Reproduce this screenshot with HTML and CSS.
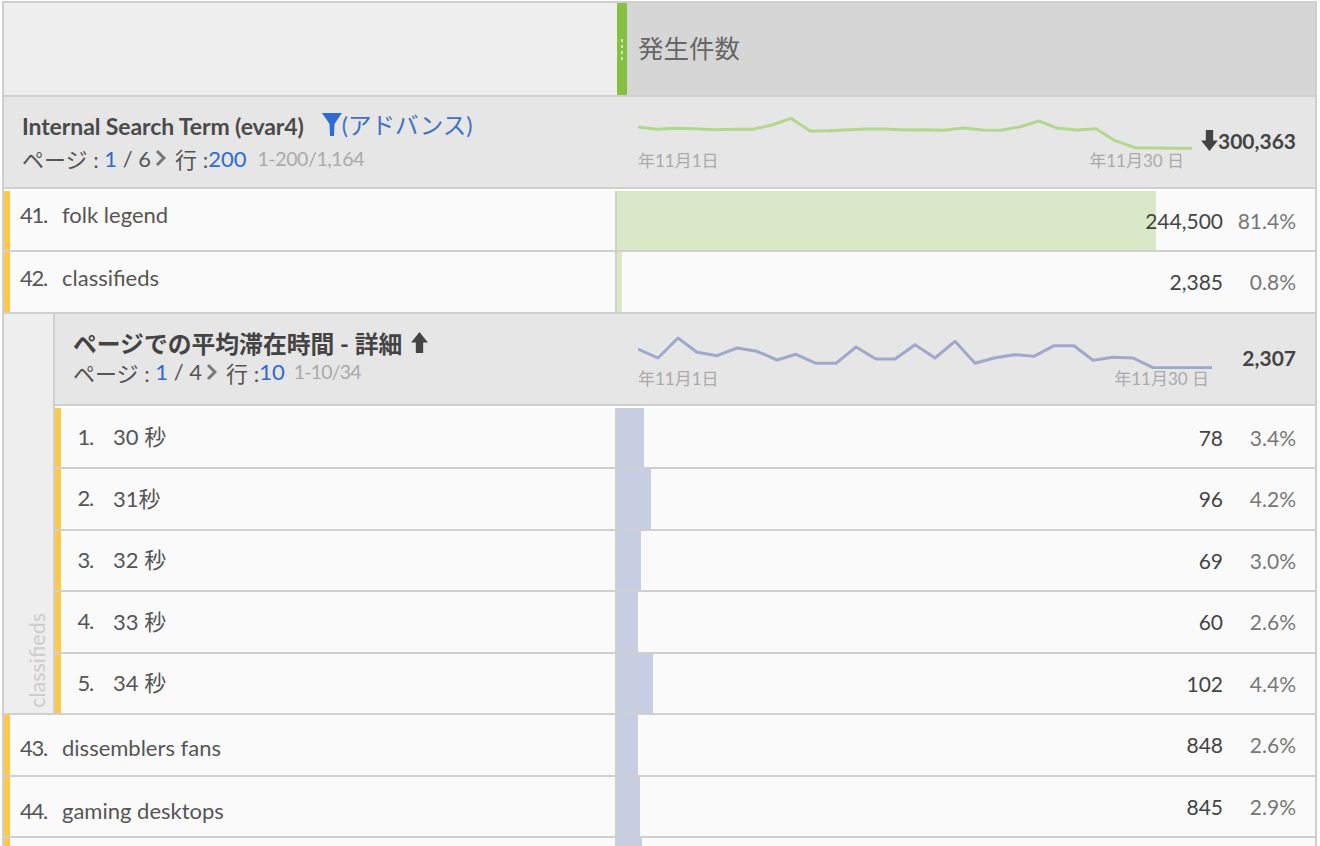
FILE: index.html
```html
<!DOCTYPE html>
<html lang="ja">
<head>
  <meta charset="UTF-8" />
  <title>Freeform Table</title>
  <link rel="stylesheet" href="styles.css">
</head>
<body>
  <div class="report">
    <div class="col-head">
      <div class="col-blank"></div>
      <div class="col-grip"><span></span><span></span><span></span><span></span></div>
      <div class="col-title">発生件数</div>
    </div>

    <div class="summary">
      <div class="summary-name">
        <div class="summary-title">
          <b>Internal Search Term (evar4)</b>
          <svg class="funnel" viewBox="0 0 20 23"><path d="M0 0H20L12.500 11L12 23H8L7.500 11Z"/></svg><span class="link">(アドバンス)</span>
        </div>
        <div class="pager">ページ : <em>1</em> / 6<svg class="chev" viewBox="0 0 11 18"><path d="M2 2L9 9L2 16"/></svg>行 :<em>200</em><small>1-200/1,164</small></div>
      </div>
      <div class="summary-data">
        <div class="trend trend-top">
          <svg viewBox="0 0 554 36"><polyline class="line-green" points="0,12 19,14.300 38,13.300 57,13.700 76,14.700 96,14.300 115,14.300 134,10 153,3.300 172,16 191,15.700 210,14.700 229,14 248,14 267,15 286,14.700 306,15.300 325,13 344,15 363,15.300 382,11.700 401,6 420,13.300 439,15 458,13.700 477,25.700 497,32.700 516,33 535,33.300 554,33.300"/></svg>
          <div class="dates"><span>年11月1日</span><span>年11月30 日</span></div>
        </div>
        <div class="total"><svg class="arrow" viewBox="0 0 16 20"><path d="M4.500 0H11.500V10H16L8 20L0 10H4.500Z"/></svg>300,363</div>
      </div>
    </div>

    <div class="rows">
      <div class="row">
        <div class="name up-more"><span class="rank">41.</span><span>folk legend</span></div>
        <div class="data"><div class="bar bar-green" style="width:539px"></div><span class="num">244,500</span><span class="pct">81.4%</span></div>
      </div>
      <div class="row">
        <div class="name up"><span class="rank">42.</span><span>classifieds</span></div>
        <div class="data"><div class="bar bar-green" style="width:5px"></div><span class="num">2,385</span><span class="pct">0.8%</span></div>
      </div>
    </div>

    <div class="nested">
      <div class="side"><span>classifieds</span></div>
      <div class="nested-main">
        <div class="summary summary-sub">
          <div class="summary-name">
            <div class="summary-title"><b>ページでの平均滞在時間 - 詳細</b><svg class="arrow arrow-up" viewBox="0 0 16 20"><path d="M4.500 20H11.500V10H16L8 0L0 10H4.500Z"/></svg></div>
            <div class="pager">ページ : <em>1</em> / 4<svg class="chev" viewBox="0 0 11 18"><path d="M2 2L9 9L2 16"/></svg>行 :<em>10</em><small>1-10/34</small></div>
          </div>
          <div class="summary-data">
            <div class="trend trend-sub">
              <svg viewBox="0 0 574 36"><polyline class="line-blue" points="0,16 20,25 40,5 59,19.300 79,22.700 99,15 119,18.300 139,27 158,21.300 178,30.300 198,30.300 218,14 238,26 257,26 277,11.700 297,25 317,8.300 337,30.300 356,25 376,21.700 396,23.300 416,12.700 436,12.700 455,27.300 475,24.300 495,25 515,34.700 535,34.700 554,34.700 574,34.700"/></svg>
              <div class="dates"><span>年11月1日</span><span>年11月30 日</span></div>
            </div>
            <div class="total">2,307</div>
          </div>
        </div>
        <div class="rows">
          <div class="row">
            <div class="name"><span class="rank">1.</span><span>30 秒</span></div>
            <div class="data"><div class="bar bar-blue" style="width:27px"></div><span class="num">78</span><span class="pct">3.4%</span></div>
          </div>
          <div class="row">
            <div class="name"><span class="rank">2.</span><span>31秒</span></div>
            <div class="data"><div class="bar bar-blue" style="width:34px"></div><span class="num">96</span><span class="pct">4.2%</span></div>
          </div>
          <div class="row">
            <div class="name"><span class="rank">3.</span><span>32 秒</span></div>
            <div class="data"><div class="bar bar-blue" style="width:24px"></div><span class="num">69</span><span class="pct">3.0%</span></div>
          </div>
          <div class="row">
            <div class="name"><span class="rank">4.</span><span>33 秒</span></div>
            <div class="data"><div class="bar bar-blue" style="width:21px"></div><span class="num">60</span><span class="pct">2.6%</span></div>
          </div>
          <div class="row">
            <div class="name"><span class="rank">5.</span><span>34 秒</span></div>
            <div class="data"><div class="bar bar-blue" style="width:36px"></div><span class="num">102</span><span class="pct">4.4%</span></div>
          </div>
        </div>
      </div>
    </div>

    <div class="row">
      <div class="name down"><span class="rank">43.</span><span>dissemblers fans</span></div>
      <div class="data"><div class="bar bar-blue" style="width:21px"></div><span class="num">848</span><span class="pct">2.6%</span></div>
    </div>
    <div class="row">
      <div class="name down-more"><span class="rank">44.</span><span>gaming desktops</span></div>
      <div class="data"><div class="bar bar-blue" style="width:23px"></div><span class="num">845</span><span class="pct">2.9%</span></div>
    </div>
    <div class="row row-cut">
      <div class="name"></div>
      <div class="data"><div class="bar bar-blue" style="width:25px"></div></div>
    </div>
  </div>
</body>
</html>
```

FILE: styles.css
```css
html, body {
  margin: 0;
  padding: 0;
  height: 846px;
  overflow: hidden;
  background-color: #fff;
}

body {
  font-family: Lato, "Noto Sans CJK JP", sans-serif;
  color: #444;
  padding-top: 1px;
  box-sizing: border-box;
}

.report {
  width: 1315px;
  margin-left: 2px;
  border: 2px solid #cfcfcf;
  border-bottom: none;
  box-sizing: border-box;
}

/* column header */
.col-head {
  display: flex;
  height: 94px;
  border-bottom: 2px solid #cfcfcf;
  box-sizing: border-box;
}

.col-blank {
  width: 613px;
  background-color: #eee;
}

.col-grip {
  width: 10px;
  background-color: #85c042;
  display: flex;
  flex-direction: column;
  align-items: center;
  justify-content: center;
  gap: 3px;
}

.col-grip span {
  width: 2px;
  height: 3px;
  background-color: #d5e8bd;
}

.col-title {
  flex: 1;
  background-color: #d6d6d6;
  color: #666;
  font-size: 25.500px;
  padding-left: 11px;
  padding-top: 25px;
  box-sizing: border-box;
}

/* summary row */
.summary {
  display: flex;
  height: 92px;
  background-color: #e6e6e6;
  border-bottom: 2px solid #cfcfcf;
  box-sizing: border-box;
}

.summary-name {
  width: 613px;
  padding: 15px 0 0 18px;
  box-sizing: border-box;
}

.summary-title {
  display: flex;
  align-items: center;
  height: 28px;
  font-size: 23px;
}

.summary-title b {
  color: #4b4b4b;
  letter-spacing: -0.1px;
}

.funnel {
  width: 20px;
  height: 23px;
  margin: 0 0 4px 18px;
  fill: #2f6bd1;
}

.link {
  color: #4170c4;
  font-size: 23.500px;
  margin-bottom: 4px;
}

.pager {
  display: flex;
  align-items: center;
  height: 30px;
  margin-top: 3px;
  font-size: 22px;
  white-space: pre;
  color: #555;
}

.pager em {
  font-style: normal;
  color: #2f6bd1;
}

.pager small {
  font-size: 19.500px;
  letter-spacing: -0.4px;
  color: #aaa;
  margin-left: 11px;
}

.chev {
  width: 11px;
  height: 18px;
  margin: 0 9px 0 4px;
  fill: none;
  stroke: #777;
  stroke-width: 3;
}

.summary-data {
  flex: 1;
  display: flex;
  align-items: center;
  justify-content: space-between;
  padding: 0 19px 0 21px;
}

.trend svg {
  display: block;
  height: 36px;
}

.trend-top {
  width: 554px;
  margin-top: 2px;
}

.trend-top svg {
  width: 554px;
}

.trend-top .dates {
  padding-right: 8px;
}

.trend-sub {
  width: 574px;
  margin-top: 4px;
}

.trend-sub svg {
  width: 574px;
}

.trend-sub .dates {
  padding-right: 3px;
}

.line-green, .line-blue {
  fill: none;
  stroke-width: 3;
  stroke-linejoin: round;
}

.line-green {
  stroke: #b5d68f;
}

.line-blue {
  stroke: #9ea9cb;
}

.dates {
  display: flex;
  justify-content: space-between;
  font-size: 17px;
  line-height: 20px;
  color: #aaa;
}

.total {
  display: flex;
  align-items: center;
  font-size: 21px;
  font-weight: 700;
  color: #444;
  margin-bottom: 3px;
}

.arrow {
  width: 17px;
  height: 21px;
  fill: #444;
  margin-right: 0;
}

.arrow-up {
  margin-left: 9px;
}

/* data rows */
.rows {
  padding-top: 1.500px;
}

.row {
  display: flex;
  height: 61.500px;
  background-color: #fafafa;
  border-bottom: 2px solid #cfcfcf;
  box-sizing: border-box;
}

.row-cut {
  height: 8px;
  border-bottom: none;
}

.name {
  width: 613px;
  display: flex;
  align-items: center;
  font-size: 22px;
  color: #555;
  border-left: 6px solid #fec84b;
  border-right: 2px solid #cfcfcf;
  box-sizing: border-box;
}

.name.up {
  padding-bottom: 8px;
}

.name.up-more {
  padding-bottom: 12px;
}

.name.down {
  padding-top: 5px;
}

.name.down-more {
  padding-top: 9px;
}

.rank {
  width: 37px;
  margin-right: 15px;
  text-align: right;
  letter-spacing: -1.200px;
}

.data {
  flex: 1;
  position: relative;
  display: flex;
  align-items: center;
  justify-content: flex-end;
  font-size: 21px;
  padding-right: 19px;
}

.bar {
  position: absolute;
  left: 0;
  top: 0;
  bottom: 0;
}

.bar-green {
  background-color: #d9e8c6;
}

.bar-blue {
  background-color: #c7cee2;
}

.num, .pct {
  position: relative;
  text-align: right;
}

.num {
  color: #444;
}

.pct {
  width: 73px;
  color: #777;
}

/* breakdown under a row */
.nested {
  display: flex;
}

.side {
  width: 51px;
  background-color: #eee;
  border-right: 2px solid #cfcfcf;
  border-bottom: 2px solid #cfcfcf;
  box-sizing: border-box;
  display: flex;
  justify-content: flex-end;
  align-items: flex-end;
}

.side span {
  writing-mode: vertical-rl;
  transform: rotate(180deg);
  font-size: 21.500px;
  line-height: 26px;
  color: #ccc;
  margin: 0 3px 5px 0;
}

.nested-main {
  flex: 1;
}

.nested .summary {
  height: 92.500px;
}

.nested .summary-name {
  width: 562px;
  padding-top: 15px;
}

.summary-sub .summary-title b {
  font-size: 23.800px;
  letter-spacing: 0;
  color: #444;
}

.summary-sub .pager {
  margin-top: 0;
}

.summary-sub .pager em + small {
  letter-spacing: -0.800px;
  margin-left: 9px;
}

.nested .name {
  width: 562px;
  padding-bottom: 4px;
}

.nested .rank {
  width: 32px;
  margin-right: 20px;
  padding-top: 2px;
}
```
